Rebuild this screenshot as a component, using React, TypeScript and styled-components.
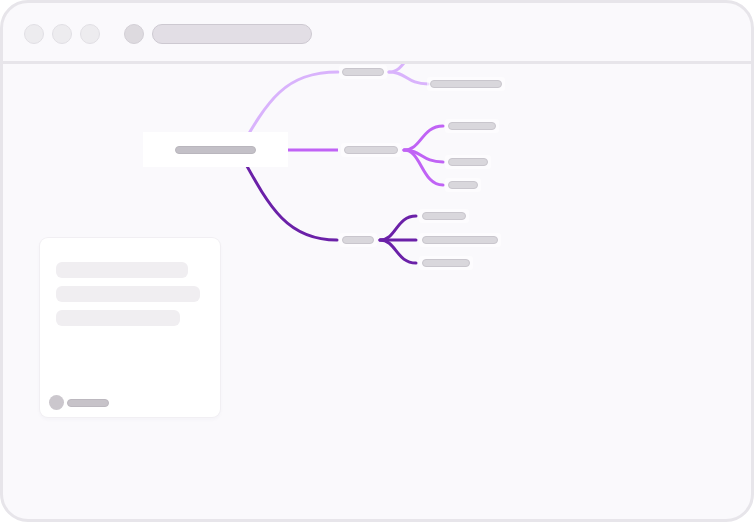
import React from "react";
import styled, { createGlobalStyle } from "styled-components";

const Global = createGlobalStyle`
  html, body { margin: 0; padding: 0; background: #ffffff; }
  body { font-family: "Inter", "Liberation Sans", sans-serif; }
  * { box-sizing: border-box; }
`;

const Window = styled.div`
  width: 754px;
  height: 522px;
  border: 3px solid #e7e5ea;
  border-radius: 28px;
  background: #faf9fc;
  overflow: hidden;
  display: flex;
  flex-direction: column;
`;

const TitleBar = styled.div`
  height: 61px;
  flex: none;
  border-bottom: 3px solid #e7e5ea;
  display: flex;
  align-items: flex-start;
  padding: 21px 0 0 21px;
`;

const Lights = styled.div`
  display: flex;
  gap: 8px;
  margin-right: 24px;
`;

const Light = styled.span`
  width: 20px;
  height: 20px;
  border-radius: 50%;
  background: #edecef;
  border: 1px solid #e1dfe4;
`;

const Favicon = styled.span`
  width: 20px;
  height: 20px;
  border-radius: 50%;
  background: #dddadf;
  border: 1px solid #d2cfd5;
  margin-right: 8px;
`;

const UrlBar = styled.div`
  width: 160px;
  height: 20px;
  border-radius: 10px;
  background: #e2dee5;
  border: 1.5px solid #cdc9d1;
`;

const Content = styled.div`
  position: relative;
  flex: 1;
  overflow: hidden;
  padding: 174px 0 0 37px;
`;

const Canvas = styled.div`
  position: absolute;
  inset: 0;
`;

const Connectors = styled.svg`
  position: absolute;
  left: 0;
  top: 0;
  width: 751px;
  height: 455px;
`;

const RootBox = styled.div`
  position: absolute;
  width: 145px;
  height: 35px;
  background: #ffffff;
  display: flex;
  align-items: center;
  justify-content: center;
`;

const RootPill = styled.span`
  width: 81px;
  height: 8px;
  border-radius: 4px;
  background: #c3c0c7;
  border: 1px solid #b9b6bd;
`;

const NodeWrap = styled.div`
  position: absolute;
  padding: 3px 3px;
  background: rgba(255, 255, 255, 0.55);
  border-radius: 3px;
  display: flex;
`;

const Pill = styled.span<{ $w: number }>`
  width: ${(p) => p.$w}px;
  height: 8px;
  border-radius: 4px;
  background: #d9d7dc;
  border: 1px solid #c9c6cd;
`;

const Card = styled.div`
  width: 180px;
  height: 179px;
  background: #ffffff;
  border-radius: 8px;
  box-shadow: 0 0 0 1px #f1eff3, 0 2px 4px rgba(60, 40, 90, 0.04);
  display: flex;
  flex-direction: column;
  padding: 24px 16px 7px 16px;
  position: relative;
`;

const Bars = styled.div`
  display: flex;
  flex-direction: column;
  gap: 8px;
`;

const Bar = styled.span<{ $w: number }>`
  width: ${(p) => p.$w}px;
  height: 16px;
  border-radius: 6px;
  background: #f0eef1;
`;

const Footer = styled.div`
  margin-top: auto;
  margin-left: -7px;
  display: flex;
  align-items: center;
  gap: 3px;
`;

const Avatar = styled.span`
  width: 15px;
  height: 15px;
  border-radius: 50%;
  background: #cbc7cd;
`;

const Name = styled.span`
  width: 42px;
  height: 8px;
  border-radius: 4px;
  background: #c7c3c9;
  border: 1px solid #bcb8bf;
`;

const OX = 3;
const OY = 64;

const LIGHT = "#d9b3fc";
const MID = "#c063f5";
const DARK = "#6b21a8";

type N = { x: number; y: number; w: number };

const nodes: N[] = [
  { x: 342, y: 68, w: 42 },
  { x: 344, y: 146, w: 54 },
  { x: 342, y: 236, w: 32 },
  { x: 430, y: 80, w: 72 },
  { x: 448, y: 122, w: 48 },
  { x: 448, y: 158, w: 40 },
  { x: 448, y: 181, w: 30 },
  { x: 422, y: 212, w: 44 },
  { x: 422, y: 236, w: 76 },
  { x: 422, y: 259, w: 48 },
];

const branch = (x0: number, y0: number, x1: number, y1: number) => {
  const m = x0 + (x1 - x0) * 0.45;
  return `M ${x0} ${y0} C ${m} ${y0}, ${m} ${y1}, ${x1} ${y1}`;
};

export default function App() {
  return (
    <>
      <Global />
      <Window>
        <TitleBar>
          <Lights>
            <Light />
            <Light />
            <Light />
          </Lights>
          <Favicon />
          <UrlBar />
        </TitleBar>
        <Content>
          <Canvas>
            <Connectors viewBox={`${OX} ${OY} 751 455`} fill="none" strokeWidth={3} strokeLinecap="round">
              <path d="M 238 152 C 268 100, 285 72, 338 72" stroke={LIGHT} />
              <path d="M 288 150 L 338 150" stroke={MID} strokeLinecap="butt" />
              <path d="M 238 150 C 268 204, 285 240, 337 240" stroke={DARK} />
              <path d={branch(389, 72, 428, 46)} stroke={LIGHT} />
              <path d={branch(389, 72, 428, 84)} stroke={LIGHT} />
              <path d={branch(404, 150, 443, 126)} stroke={MID} />
              <path d={branch(404, 150, 443, 162)} stroke={MID} />
              <path d={branch(404, 150, 443, 185)} stroke={MID} />
              <path d={branch(380, 240, 416, 216)} stroke={DARK} />
              <path d="M 380 240 L 416 240" stroke={DARK} />
              <path d={branch(380, 240, 416, 263)} stroke={DARK} />
            </Connectors>
            <RootBox style={{ left: 143 - OX, top: 132 - OY }}>
              <RootPill />
            </RootBox>
            {nodes.map((n, i) => (
              <NodeWrap key={i} style={{ left: n.x - OX - 3, top: n.y - OY - 3 }}>
                <Pill $w={n.w} />
              </NodeWrap>
            ))}
          </Canvas>
          <Card>
            <Bars>
              <Bar $w={132} />
              <Bar $w={144} />
              <Bar $w={124} />
            </Bars>
            <Footer>
              <Avatar />
              <Name />
            </Footer>
          </Card>
        </Content>
      </Window>
    </>
  );
}
